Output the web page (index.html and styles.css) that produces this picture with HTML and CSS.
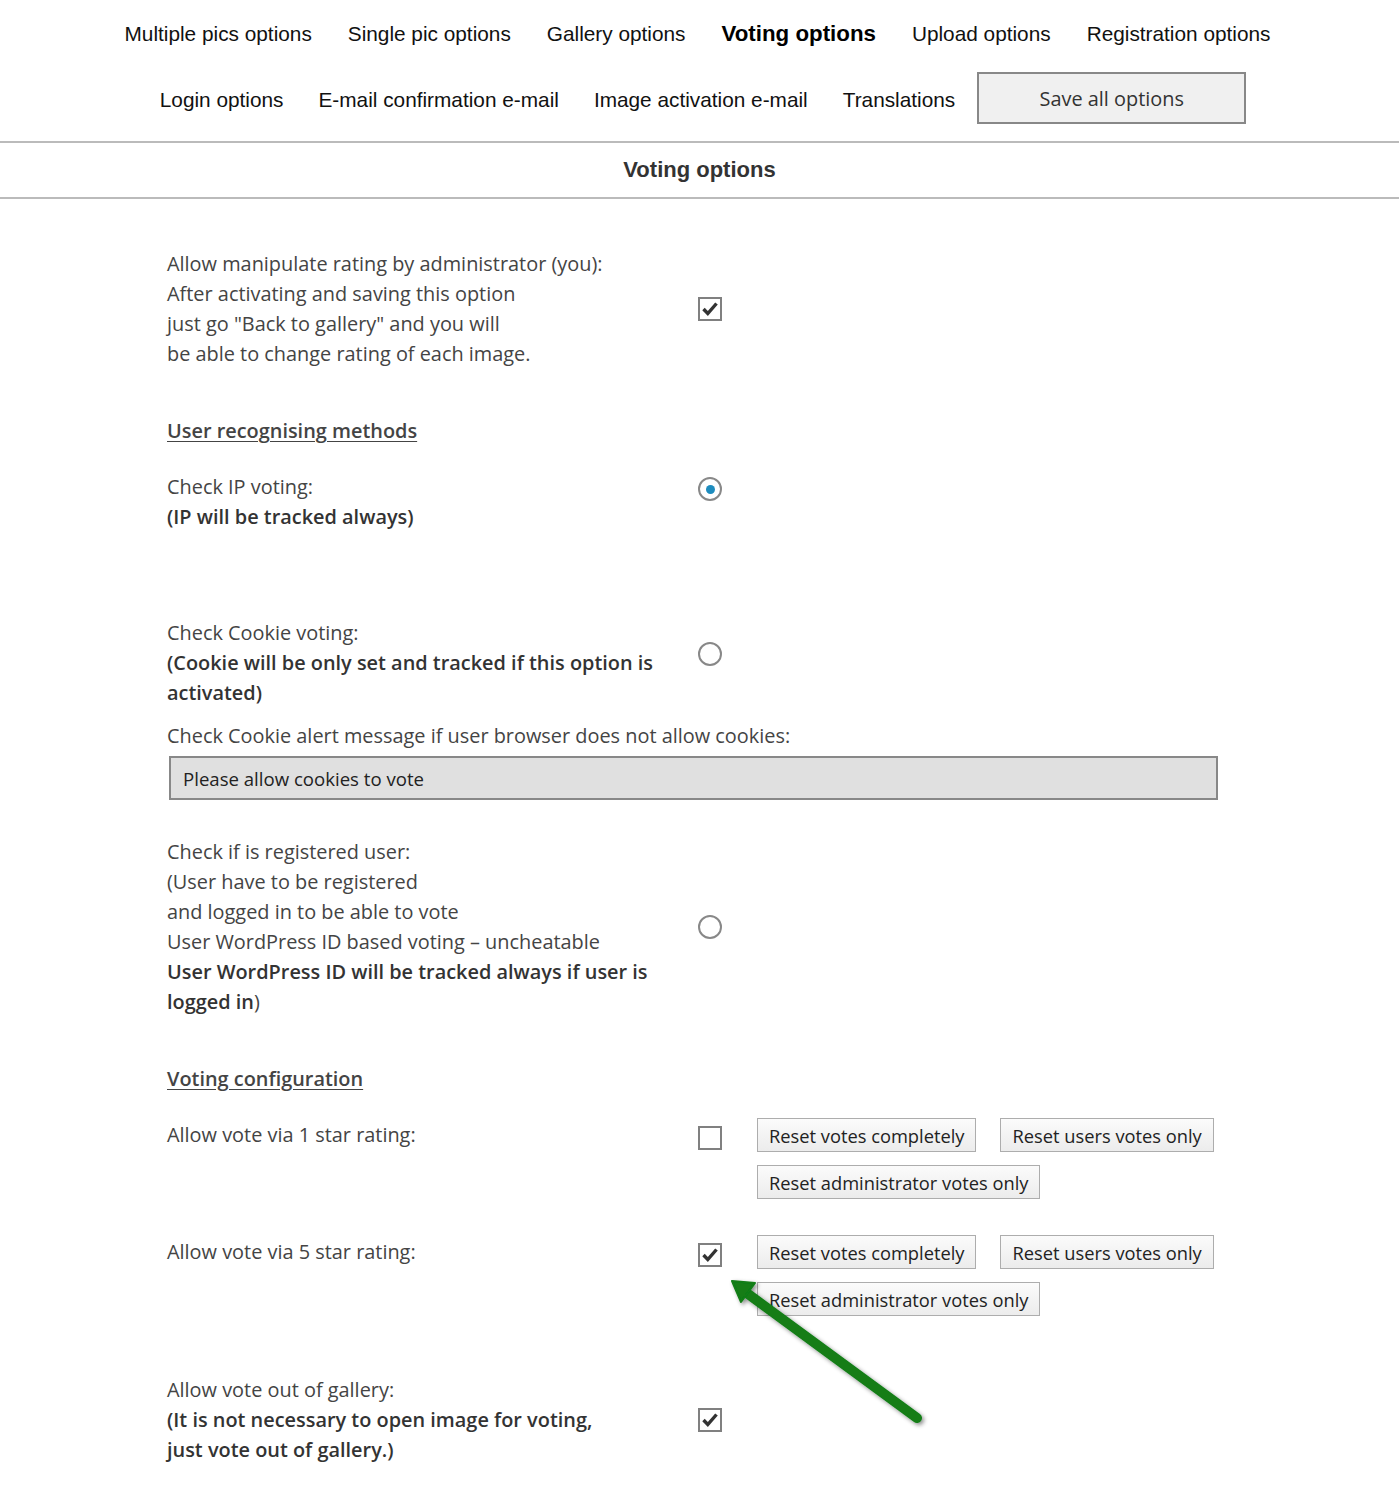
FILE: index.html
```html
<!DOCTYPE html>
<html>
<head>
  <meta charset="UTF-8">
  <title>Voting options</title>
  <link rel="stylesheet" href="styles.css">
</head>
<body>
  <nav class="tabs">
    <div class="tabs-row">
      <a class="tab">Multiple pics options</a>
      <a class="tab">Single pic options</a>
      <a class="tab">Gallery options</a>
      <a class="tab tab-active">Voting options</a>
      <a class="tab">Upload options</a>
      <a class="tab">Registration options</a>
    </div>
    <div class="tabs-row tabs-row-second">
      <a class="tab">Login options</a>
      <a class="tab">E-mail confirmation e-mail</a>
      <a class="tab">Image activation e-mail</a>
      <a class="tab">Translations</a>
      <button type="button" class="save-btn">Save all options</button>
    </div>
  </nav>

  <h2 class="section-title">Voting options</h2>

  <div class="options">
    <div class="row row-first">
      <div class="label">
        Allow manipulate rating by administrator (you):<br>
        After activating and saving this option<br>
        just go "Back to gallery" and you will<br>
        be able to change rating of each image.
      </div>
      <div class="control"><span class="check checked"><svg viewBox="0 0 20 20"><path d="M3.5 10 L7.8 14.5 L16.5 4.5"/></svg></span></div>
    </div>

    <h3 class="group-title">User recognising methods</h3>

    <div class="row row-ip">
      <div class="label">
        Check IP voting:<br>
        <strong>(IP will be tracked always)</strong>
      </div>
      <div class="control control-ip"><span class="radio selected"></span></div>
    </div>

    <div class="row row-cookie">
      <div class="label">
        Check Cookie voting:<br>
        <strong>(Cookie will be only set and tracked if this option is<br>activated)</strong>
      </div>
      <div class="control control-cookie"><span class="radio"></span></div>
    </div>

    <div class="alert-field">
      <label for="cookieMsg">Check Cookie alert message if user browser does not allow cookies:</label>
      <input type="text" id="cookieMsg" class="text-input" value="Please allow cookies to vote">
    </div>

    <div class="row row-registered">
      <div class="label">
        Check if is registered user:<br>
        (User have to be registered<br>
        and logged in to be able to vote<br>
        User WordPress ID based voting – uncheatable<br>
        <strong>User WordPress ID will be tracked always if user is<br>logged in</strong>)
      </div>
      <div class="control"><span class="radio"></span></div>
    </div>

    <h3 class="group-title group-title-voting">Voting configuration</h3>

    <div class="row row-star">
      <div class="label label-star">Allow vote via 1 star rating:</div>
      <div class="control control-star">
        <span class="check"></span>
        <div class="reset-btns">
          <div class="reset-line">
            <button type="button" class="reset-btn">Reset votes completely</button>
            <button type="button" class="reset-btn">Reset users votes only</button>
          </div>
          <div class="reset-line">
            <button type="button" class="reset-btn">Reset administrator votes only</button>
          </div>
        </div>
      </div>
    </div>

    <div class="row row-star row-star-five">
      <div class="label label-star">Allow vote via 5 star rating:</div>
      <div class="control control-star">
        <span class="check checked"><svg viewBox="0 0 20 20"><path d="M3.5 10 L7.8 14.5 L16.5 4.5"/></svg></span>
        <div class="reset-btns">
          <div class="reset-line">
            <button type="button" class="reset-btn">Reset votes completely</button>
            <button type="button" class="reset-btn">Reset users votes only</button>
          </div>
          <div class="reset-line">
            <button type="button" class="reset-btn">Reset administrator votes only</button>
          </div>
        </div>
      </div>
    </div>

    <div class="row row-gallery">
      <div class="label">
        Allow vote out of gallery:<br>
        <strong>(It is not necessary to open image for voting,<br>just vote out of gallery.)</strong>
      </div>
      <div class="control"><span class="check checked"><svg viewBox="0 0 20 20"><path d="M3.5 10 L7.8 14.5 L16.5 4.5"/></svg></span></div>
    </div>
  </div>

  <!-- annotation arrow drawn over the page -->
  <svg class="arrow" viewBox="700 1260 260 180" width="260" height="180">
    <defs>
      <filter id="shadow" x="-20%" y="-20%" width="140%" height="140%">
        <feDropShadow dx="2" dy="2" stdDeviation="2" flood-color="#000" flood-opacity="0.45"/>
      </filter>
    </defs>
    <g filter="url(#shadow)" fill="#127d17" stroke="#127d17">
      <line x1="917" y1="1418" x2="744" y2="1291" stroke-width="10" stroke-linecap="round"/>
      <polygon points="732,1281 755,1283 741,1302" stroke-width="2" stroke-linejoin="round"/>
    </g>
  </svg>
</body>
</html>
```

FILE: styles.css
```css
body {
  margin: 0;
  background-color: #fff;
  font-family: "Open Sans", "Noto Sans", sans-serif;
  font-size: 19.9px;
  color: #444;
  position: relative;
}

/* top tabs */
.tabs {
  font-family: "Liberation Sans", Arial, sans-serif;
  font-size: 20.8px;
  color: #111;
  padding-top: 22px;
}
.tabs-row {
  display: flex;
  justify-content: center;
  align-items: center;
  gap: 36px;
  line-height: 24px;
  padding-right: 4px;
}
.tabs-row-second {
  margin-top: 26px;
  padding-left: 7px;
  padding-right: 0;
  gap: 35px;
}
.tabs-row-second .tab {
  padding-top: 4px;
}
.tab {
  cursor: pointer;
  white-space: nowrap;
}
.tab-active {
  font-weight: bold;
  font-size: 22.3px;
  color: #000;
}
.save-btn {
  width: 269px;
  height: 52px;
  margin-left: -13px;
  padding-top: 2px;
  background-color: #f0f0f0;
  border: 2px solid #888;
  font-family: "Open Sans", "Noto Sans", sans-serif;
  font-size: 19.9px;
  color: #333;
  cursor: pointer;
}

.section-title {
  margin: 17px 0 0;
  border-top: 2px solid #bbb;
  border-bottom: 2px solid #bbb;
  height: 54px;
  line-height: 54px;
  text-align: center;
  font-family: "Liberation Sans", Arial, sans-serif;
  font-size: 22px;
  font-weight: bold;
  color: #333;
}

/* options table */
.options {
  width: 1051px;
  margin-left: 167px;
  padding-top: 50px;
  padding-bottom: 40px;
  line-height: 30px;
}
.row {
  display: grid;
  grid-template-columns: 531px 1fr;
  align-items: center;
}
.label strong {
  font-weight: 600;
  color: #333;
}
.control {
  display: flex;
  align-items: center;
}
.group-title {
  margin: 47px 0 26px;
  font-size: 19.9px;
  font-weight: 600;
  line-height: 30px;
  color: #444;
  text-decoration: underline;
  text-underline-offset: 3px;
}
.row-ip {
  align-items: start;
}
.control-ip {
  padding-top: 5px;
}
.row-cookie {
  margin-top: 86px;
  align-items: start;
}
.control-cookie {
  padding-top: 24px;
}

.alert-field {
  margin-top: 13px;
}
.alert-field label {
  display: block;
}
.text-input {
  display: block;
  box-sizing: border-box;
  width: 1049px;
  height: 44px;
  margin: 5px 0 0 2px;
  padding: 0 12px;
  background-color: #e0e0e0;
  border: 2px solid #888;
  font-family: "Open Sans", "Noto Sans", sans-serif;
  font-size: 18.6px;
  color: #222;
}
.row-registered {
  margin-top: 37px;
}
.group-title-voting {
  margin-top: 47px;
}

.row-star {
  align-items: start;
}
.row-star-five {
  margin-top: 38px;
}
.label-star {
  padding-top: 0;
}
.control-star {
  align-items: flex-start;
  gap: 35px;
  margin-top: -2px;
}
.control-star .check {
  margin-top: 8px;
}
.reset-btns {
  display: flex;
  flex-direction: column;
  align-items: flex-start;
  gap: 13px;
}
.reset-line {
  display: flex;
  gap: 24px;
}
.reset-btn {
  height: 34px;
  padding: 0 11px;
  background: linear-gradient(#fbfbfb, #ececec);
  border: 1px solid #adadad;
  font-family: "Open Sans", "Noto Sans", sans-serif;
  font-size: 18.3px;
  color: #222;
  white-space: nowrap;
  cursor: pointer;
}
.row-gallery {
  margin-top: 59px;
}

/* checkbox and radio look */
.check {
  box-sizing: border-box;
  display: inline-block;
  width: 24px;
  height: 24px;
  border: 2px solid #808080;
  background-color: #fff;
}
.check svg {
  display: block;
  width: 20px;
  height: 20px;
  fill: none;
  stroke: #333;
  stroke-width: 3.4;
}
.radio {
  box-sizing: border-box;
  display: inline-flex;
  align-items: center;
  justify-content: center;
  width: 24px;
  height: 24px;
  border: 2px solid #888;
  border-radius: 50%;
  background-color: #fff;
}
.radio.selected::after {
  content: "";
  width: 9px;
  height: 9px;
  border-radius: 50%;
  background-color: #1e8cbe;
}

.arrow {
  position: absolute;
  left: 700px;
  top: 1260px;
  overflow: visible;
}
```
